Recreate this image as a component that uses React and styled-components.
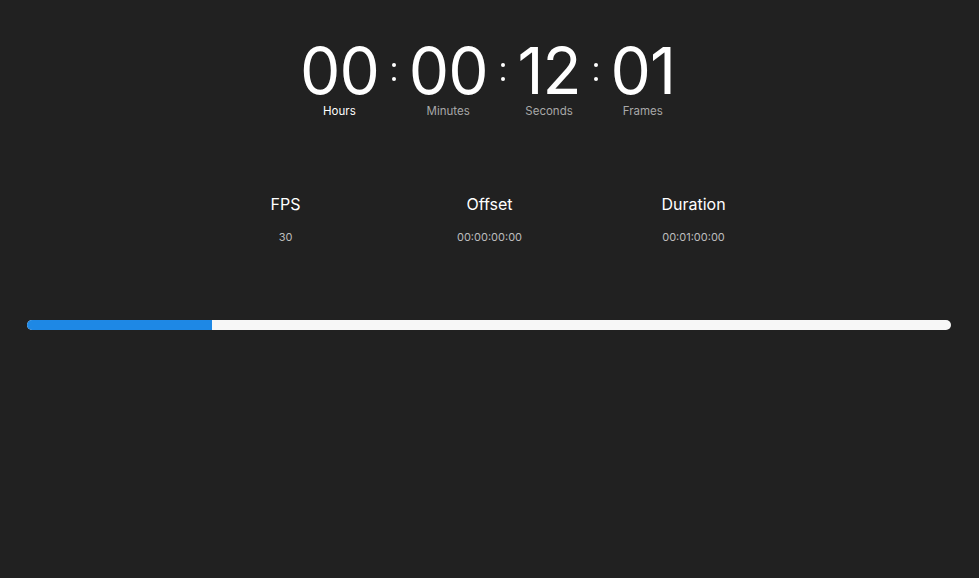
import React from "react";
import styled, { createGlobalStyle } from "styled-components";

const GlobalStyle = createGlobalStyle`
  html, body {
    margin: 0;
    padding: 0;
    background: #212121;
    height: 100%;
  }
  body {
    font-family: Inter, "Noto Sans", "Liberation Sans", sans-serif;
    color: #ffffff;
  }
`;

const Page = styled.div`
  width: 100%;
  min-height: 578px;
  background: #212121;
  display: flex;
  flex-direction: column;
  align-items: center;
  padding-top: 38px;
  box-sizing: border-box;
`;

const Timecode = styled.div`
  display: flex;
  align-items: flex-start;
  gap: 13px;
  margin-left: -4px;
`;

const Unit = styled.div`
  display: flex;
  flex-direction: column;
  align-items: center;
`;

const Digits = styled.span`
  display: block;
  font-size: 64px;
  font-weight: 400;
  line-height: 66px;
  letter-spacing: -1px;
  color: #ffffff;
`;

const Label = styled.span`
  display: block;
  font-size: 11.5px;
  line-height: 14px;
  color: ${(p) => (p.active ? "#ffffff" : "#a8a8a8")};
`;

const Colon = styled.span`
  display: flex;
  flex-direction: column;
  justify-content: center;
  gap: 10px;
  height: 66px;
  padding-top: 2px;
  box-sizing: border-box;
`;

const Dot = styled.span`
  width: 4px;
  height: 4px;
  border-radius: 50%;
  background: #ffffff;
`;

const Stats = styled.div`
  display: grid;
  grid-template-columns: repeat(3, 204px);
  margin-top: 76px;
`;

const Stat = styled.div`
  display: flex;
  flex-direction: column;
  align-items: center;
  gap: 16px;
`;

const StatTitle = styled.span`
  font-size: 16px;
  line-height: 20px;
  color: #ffffff;
`;

const StatValue = styled.span`
  font-size: 11px;
  line-height: 14px;
  color: #bdbdbd;
`;

const Track = styled.div`
  align-self: stretch;
  margin: 76px 28px 0 27px;
  height: 10px;
  border-radius: 5px;
  background: #f7f7f7;
  overflow: hidden;
  display: flex;
`;

const Fill = styled.div`
  height: 100%;
  background: #1e88e5;
`;

const units = [
  { value: "00", label: "Hours", active: true },
  { value: "00", label: "Minutes" },
  { value: "12", label: "Seconds" },
  { value: "01", label: "Frames" },
];

const stats = [
  { title: "FPS", value: "30" },
  { title: "Offset", value: "00:00:00:00" },
  { title: "Duration", value: "00:01:00:00" },
];

export default function App() {
  const progress = (12 + 1 / 30) / 60;
  return (
    <>
      <GlobalStyle />
      <Page>
        <Timecode>
          {units.map((u, i) => (
            <React.Fragment key={u.label}>
              {i > 0 && (
                <Colon>
                  <Dot />
                  <Dot />
                </Colon>
              )}
              <Unit>
                <Digits>{u.value}</Digits>
                <Label active={u.active}>{u.label}</Label>
              </Unit>
            </React.Fragment>
          ))}
        </Timecode>
        <Stats>
          {stats.map((s) => (
            <Stat key={s.title}>
              <StatTitle>{s.title}</StatTitle>
              <StatValue>{s.value}</StatValue>
            </Stat>
          ))}
        </Stats>
        <Track>
          <Fill style={{ width: `${progress * 100}%` }} />
        </Track>
      </Page>
    </>
  );
}
